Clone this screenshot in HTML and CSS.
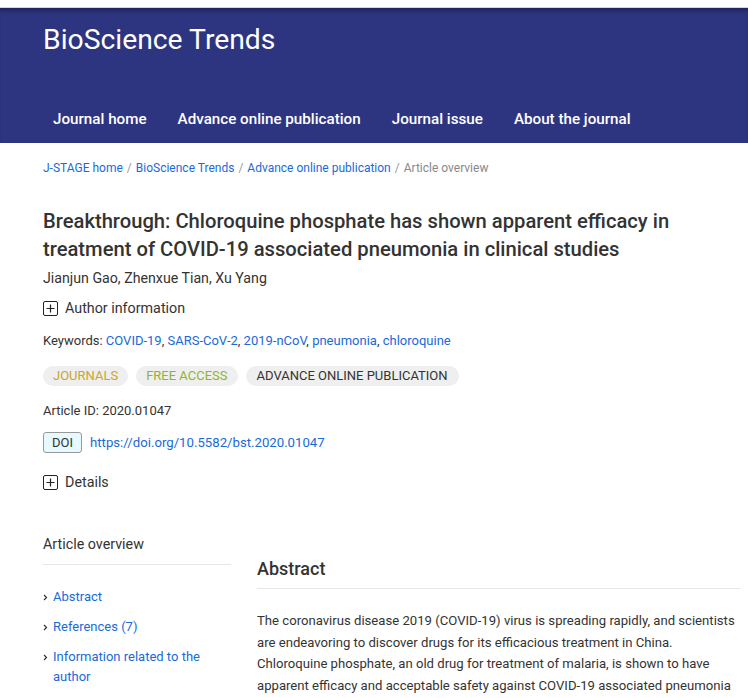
FILE: index.html
```html
<!DOCTYPE html>
<html lang="en">
<head>
<meta charset="utf-8">
<title>BioScience Trends</title>
<link rel="stylesheet" href="styles.css">
</head>
<body>
<div class="topstrip"></div>
<header class="masthead">
  <div class="journal-title">BioScience Trends</div>
  <nav class="mainnav">
    <a href="#">Journal home</a>
    <a href="#">Advance online publication</a>
    <a href="#">Journal issue</a>
    <a href="#">About the journal</a>
  </nav>
</header>
<main class="page">
  <div class="crumbs">
    <a href="#">J-STAGE home</a><span class="sep">/</span><a href="#">BioScience Trends</a><span class="sep">/</span><a href="#">Advance online publication</a><span class="sep">/</span><span class="current">Article overview</span>
  </div>
  <h1 class="article-title">Breakthrough: Chloroquine phosphate has shown apparent efficacy in treatment of COVID-19 associated pneumonia in clinical studies</h1>
  <div class="authors">Jianjun Gao, Zhenxue Tian, Xu Yang</div>
  <div class="toggle toggle-author"><span class="plusbox"><svg width="9" height="9" viewBox="0 0 9 9"><path d="M4.5 0.5v8M0.5 4.5h8" stroke="#222" stroke-width="1.2" fill="none"/></svg></span>Author information</div>
  <div class="keywords">Keywords: <a href="#">COVID-19</a>, <a href="#">SARS-CoV-2</a>, <a href="#">2019-nCoV</a>, <a href="#">pneumonia</a>, <a href="#">chloroquine</a></div>
  <div class="tags">
    <span class="tag tag-journal">JOURNALS</span>
    <span class="tag tag-free">FREE ACCESS</span>
    <span class="tag tag-aop">ADVANCE ONLINE PUBLICATION</span>
  </div>
  <div class="article-id">Article ID: 2020.01047</div>
  <div class="doi"><span class="doi-badge">DOI</span><a href="#">https://doi.org/10.5582/bst.2020.01047</a></div>
  <div class="toggle toggle-details"><span class="plusbox"><svg width="9" height="9" viewBox="0 0 9 9"><path d="M4.5 0.5v8M0.5 4.5h8" stroke="#222" stroke-width="1.2" fill="none"/></svg></span>Details</div>

  <div class="columns">
    <aside class="sidebar">
      <h3 class="side-head">Article overview</h3>
      <ul class="side-list">
        <li><svg class="chev" width="5" height="7" viewBox="0 0 5 7"><path d="M1 1l2.5 2.5L1 6" stroke="#333" stroke-width="1.2" fill="none"/></svg><a href="#">Abstract</a></li>
        <li><svg class="chev" width="5" height="7" viewBox="0 0 5 7"><path d="M1 1l2.5 2.5L1 6" stroke="#333" stroke-width="1.2" fill="none"/></svg><a href="#">References (7)</a></li>
        <li><svg class="chev" width="5" height="7" viewBox="0 0 5 7"><path d="M1 1l2.5 2.5L1 6" stroke="#333" stroke-width="1.2" fill="none"/></svg><a href="#">Information related to the author</a></li>
      </ul>
    </aside>
    <section class="content">
      <h2 class="abs-head">Abstract</h2>
      <p class="abs-text">The coronavirus disease 2019 (COVID-19) virus is spreading rapidly, and scientists are endeavoring to discover drugs for its efficacious treatment in China. Chloroquine phosphate, an old drug for treatment of malaria, is shown to have apparent efficacy and acceptable safety against COVID-19 associated pneumonia in multicenter clinical trials conducted in China.</p>
    </section>
  </div>
</main>
</body>
</html>
```
FILE: styles.css
```css
html, body {
  margin: 0;
  padding: 0;
  background: #fff;
}
body {
  font-family: Roboto, "Liberation Sans", Arial, sans-serif;
  color: #333;
  overflow: hidden;
}
a {
  color: #1b6ad8;
  text-decoration: none;
}
.topstrip {
  height: 7px;
  border-bottom: 1px solid #d4d6de;
  background: #fff;
}
.masthead {
  background: #2e3580;
  height: 135px;
  display: flex;
  flex-direction: column;
  justify-content: space-between;
  box-shadow: inset 0 5px 5px -3px rgba(10, 12, 50, 0.55);
}
.journal-title {
  color: #fff;
  font-size: 28.3px;
  line-height: 32px;
  padding: 16px 0 0 43px;
}
.mainnav {
  display: flex;
  gap: 31px;
  padding-left: 53px;
  height: 48px;
  align-items: center;
}
.mainnav a {
  color: #fff;
  font-size: 15.2px;
  font-weight: 500;
}
.page {
  padding: 0 8px 0 43px;
}
.crumbs {
  margin-top: 15px;
  font-size: 12px;
  line-height: 20px;
}
.crumbs .sep {
  color: #999;
  margin: 0 4px;
}
.crumbs .current {
  color: #888;
}
.article-title {
  margin: 29px 0 0;
  font-size: 20.2px;
  line-height: 28px;
  font-weight: 500;
  color: #333;
}
.authors {
  margin-top: 5px;
  font-size: 14.2px;
  line-height: 20px;
}
.toggle {
  display: flex;
  align-items: center;
  font-size: 14.3px;
  line-height: 22px;
  color: #333;
}
.toggle-author {
  margin-top: 9px;
}
.toggle-details {
  margin-top: 18px;
}
.plusbox {
  width: 13px;
  height: 13px;
  border: 1px solid #222;
  border-radius: 2px;
  display: inline-flex;
  align-items: center;
  justify-content: center;
  margin-right: 7px;
}
.keywords {
  margin-top: 12px;
  font-size: 13px;
  line-height: 20px;
}
.tags {
  margin-top: 15px;
  display: flex;
  gap: 8px;
}
.tag {
  background: #efefef;
  border-radius: 10px;
  height: 20px;
  line-height: 20px;
  font-size: 13px;
  padding: 0 10px;
}
.tag-journal { color: #c9a62e; }
.tag-free { color: #8fb52b; }
.tag-aop { color: #333; padding: 0 11px; }
.article-id {
  margin-top: 15px;
  font-size: 13px;
  line-height: 20px;
}
.doi {
  margin-top: 11px;
  display: flex;
  align-items: center;
  gap: 8px;
  font-size: 13px;
}
.doi a {
  font-size: 13.2px;
}
.doi-badge {
  border: 1px solid #999;
  border-radius: 3px;
  background: #e6f9ff;
  height: 19px;
  line-height: 19px;
  padding: 0 8px;
  color: #333;
}
.columns {
  margin-top: 40px;
  display: flex;
  align-items: flex-start;
  gap: 26px;
}
.sidebar {
  width: 188px;
  flex: none;
}
.side-head {
  margin: 0;
  font-size: 14.3px;
  font-weight: 400;
  line-height: 22px;
  padding-bottom: 9px;
  border-bottom: 1px solid #e6e6e6;
}
.side-list {
  list-style: none;
  margin: 22px 0 0;
  padding: 0;
  font-size: 13px;
  line-height: 20px;
}
.side-list li {
  display: flex;
  align-items: flex-start;
  margin-bottom: 10px;
}
.side-list .chev {
  flex: none;
  margin: 7px 5px 0 0;
}
.content {
  flex: 1;
  margin-top: 23px;
}
.abs-head {
  margin: 0;
  font-size: 18px;
  font-weight: 500;
  line-height: 26px;
  padding-bottom: 6px;
  border-bottom: 1px solid #e6e6e6;
}
.abs-text {
  margin: 21px 0 0;
  font-size: 13.13px;
  line-height: 21.7px;
}
```
